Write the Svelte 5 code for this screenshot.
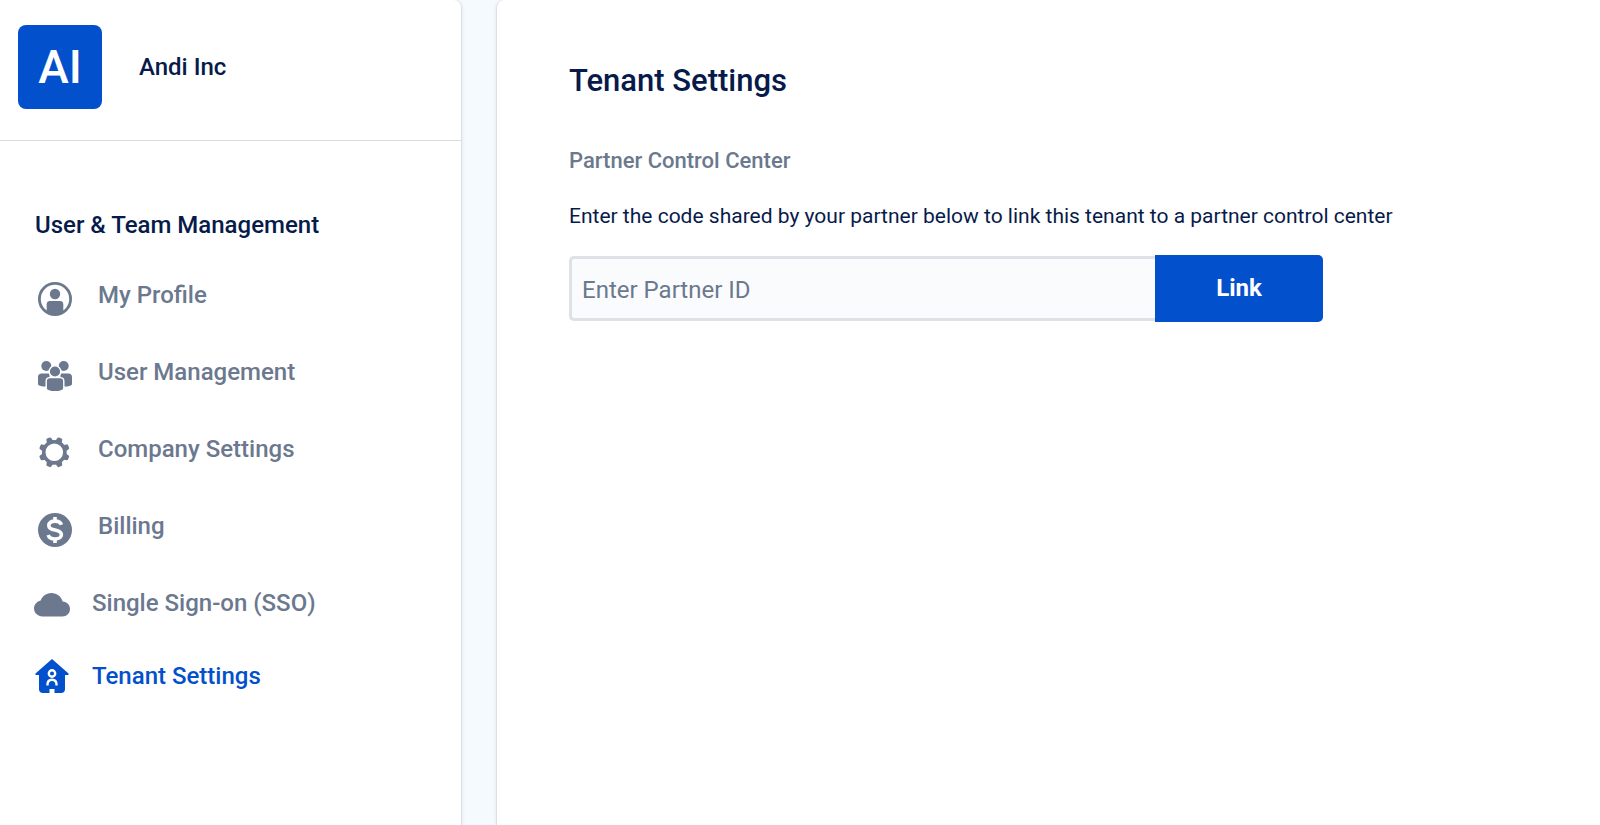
<script>
    const company = { name: "Andi Inc", initials: "AI" };

    const navItems = [
        { id: "profile", label: "My Profile" },
        { id: "users", label: "User Management" },
        { id: "company", label: "Company Settings" },
        { id: "billing", label: "Billing" },
        { id: "sso", label: "Single Sign-on (SSO)", compact: true },
        { id: "tenant", label: "Tenant Settings", compact: true },
    ];

    let activeItem = $state("tenant");
    let partnerId = $state("");

    function selectItem(e, id) {
        e.preventDefault();
        activeItem = id;
    }

    function linkPartner(e) {
        e.preventDefault();
        partnerId = partnerId.trim();
    }
</script>

{#snippet icon(id)}
    <svg class="icon" viewBox="0 0 34 34" aria-hidden="true">
        {#if id === "profile"}
            <circle cx="17" cy="17" r="15.6" fill="none" stroke="currentColor" stroke-width="2.8" />
            <circle cx="17" cy="12" r="5.2" />
            <path d="M8.7 29.5v-7.300c0-2 1.400-3.200 3.200-3.200h10.200c1.800 0 3.200 1.200 3.200 3.200v7.300A15.600 15.600 0 0 1 17 32.500a15.600 15.600 0 0 1-8.300-3z" />
        {:else if id === "users"}
            <circle cx="8.3" cy="7" r="5" />
            <circle cx="25.7" cy="7" r="5" />
            <path d="M3.5 14.500h8v13H6c-3 0-6-1-6-2.500v-7c0-2.300 1.400-3.500 3.500-3.500z" />
            <path d="M30.500 14.500h-8v13H28c3 0 6-1 6-2.500v-7c0-2.300-1.400-3.500-3.500-3.500z" />
            <circle class="cutout" cx="17" cy="12.500" r="5.800" />
            <path class="cutout" d="M11.900 18.600h10.200c2.200 0 3.700 1.300 3.700 3.400v7.500c0 1.900-4 3.300-8.800 3.300s-8.800-1.400-8.800-3.300V22c0-2.100 1.500-3.400 3.700-3.400z" />
        {:else if id === "company"}
            <g transform="translate(16.300 16.300)">
                {#each [22.5, 67.5, 112.5, 157.5, 202.5, 247.5, 292.5, 337.5] as angle}
                    <path transform="rotate({angle})" d="M-3.600-10l1-4.400q.2-1 1.200-1h2.800q1 0 1.200 1l1 4.400z" />
                {/each}
                <circle r="10.600" fill="none" stroke="currentColor" stroke-width="3.600" />
            </g>
        {:else if id === "billing"}
            <circle cx="17" cy="17" r="17" />
            <path
                class="line dollar"
                d="M23.400 11.800c-.8-2.500-3.200-3.700-6.400-3.700-3.700 0-6.200 1.700-6.200 4.300 0 2.800 2.700 3.900 6.200 4.600 3.900.8 6.400 1.800 6.400 4.700 0 2.600-2.600 4.300-6.400 4.300-3.600 0-6-1.300-6.800-4M17 4v4.500M17 25.500V30"
            />
        {:else if id === "sso"}
            <path d="M7.500 30.500C2.800 30.500-1 27-1 22.600c0-4 2.800-7.300 6.700-8.200C7.300 10 11.700 7 16.500 7c5.400 0 10 3.600 11.100 8.600C32 16 35 19 35 23c0 4.200-3.300 7.500-7.500 7.500z" />
        {:else}
            <path d="M17 0l16.500 14.600q.7 1-.4 1.400H30v14q0 4-4 4h-6.500v-4h-5v4H8q-4 0-4-4V16H.900q-1.100-.4-.4-1.400z" />
            <circle class="line thin" cx="17" cy="14.500" r="3.200" />
            <path class="line thin" d="M12.500 26.500v-1c0-2.900 1.700-4.800 4.500-4.800s4.500 1.900 4.500 4.800v1" />
        {/if}
    </svg>
{/snippet}

<div class="page">
    <aside class="sidebar">
        <header class="company">
            <div class="logo">{company.initials}</div>
            <span class="company-name">{company.name}</span>
        </header>

        <nav class="menu" aria-labelledby="menu-title">
            <h2 id="menu-title">User &amp; Team Management</h2>
            <ul>
                {#each navItems as item (item.id)}
                    <li>
                        <a
                            class="nav-link"
                            class:compact={item.compact}
                            class:active={activeItem === item.id}
                            href="#{item.id}"
                            aria-current={activeItem === item.id ? "page" : undefined}
                            onclick={(e) => selectItem(e, item.id)}
                        >
                            {@render icon(item.id)}
                            <span>{item.label}</span>
                        </a>
                    </li>
                {/each}
            </ul>
        </nav>
    </aside>

    <main class="content">
        <h1>Tenant Settings</h1>
        <h2>Partner Control Center</h2>
        <label for="partner-id">
            Enter the code shared by your partner below to link this tenant to a partner control center
        </label>
        <form class="link-form" onsubmit={linkPartner}>
            <input id="partner-id" type="text" placeholder="Enter Partner ID" bind:value={partnerId} />
            <button type="submit">Link</button>
        </form>
    </main>
</div>

<style>
    :global(body) {
        margin: 0;
        background: #f5faff;
    }

    .page {
        display: grid;
        grid-template-columns: minmax(320px, 462px) minmax(0, 1fr);
        gap: 34px;
        min-height: 100vh;
        color: #071b4b;
        font-family: Roboto, "Liberation Sans", sans-serif;
    }

    .page * {
        box-sizing: border-box;
    }

    .sidebar,
    .content {
        background: #fff;
        border: 1px solid #dcdfe6;
        border-top: none;
        border-bottom: none;
        box-shadow: 0 0 4px rgba(9, 30, 66, 0.08);
    }

    .sidebar {
        border-left: none;
        border-radius: 0 8px 0 0;
    }

    .content {
        padding: 63px 40px 40px 72px;
        border-right: none;
        border-radius: 8px 0 0 0;
    }

    .company {
        display: flex;
        align-items: center;
        gap: 37px;
        padding: 25px 18px 31px;
        border-bottom: 1px solid #d9dce4;
    }

    .logo {
        display: grid;
        place-items: center;
        width: 84px;
        height: 84px;
        border-radius: 8px;
        background: #0350cc;
        color: #fff;
        font-size: 46px;
        font-weight: 500;
    }

    .company-name {
        font-size: 24px;
        font-weight: 500;
        line-height: 32px;
    }

    .menu {
        padding: 68px 35px 40px;
    }

    h1,
    h2 {
        margin: 0;
        font-weight: 500;
    }

    .menu h2 {
        font-size: 24px;
        line-height: 32px;
    }

    ul {
        display: grid;
        gap: 40px;
        margin: 38px 0 0;
        padding: 0;
        list-style: none;
    }

    .nav-link {
        display: flex;
        align-items: flex-start;
        gap: 26px;
        height: 37px;
        padding-left: 3px;
        color: #6b788e;
        font-size: 24px;
        font-weight: 500;
        line-height: 32px;
        text-decoration: none;
    }

    .nav-link.compact {
        gap: 23px;
        height: 33px;
        padding-left: 0;
    }

    .nav-link.active {
        color: #0350cc;
    }

    .icon {
        flex: none;
        align-self: flex-end;
        width: 34px;
        height: 34px;
        overflow: visible;
        fill: currentColor;
    }

    .cutout {
        stroke: #fff;
        stroke-width: 1.4;
    }

    .line {
        fill: none;
        stroke: #fff;
    }

    .dollar {
        stroke-width: 3.6;
    }

    .thin {
        stroke-width: 2.4;
    }

    h1 {
        font-size: 31px;
        line-height: 36px;
    }

    .content h2 {
        margin-top: 48px;
        color: #6b788e;
        font-size: 22px;
        line-height: 28px;
    }

    label {
        display: block;
        margin-top: 27px;
        font-size: 21px;
        line-height: 28px;
    }

    .link-form {
        display: flex;
        align-items: center;
        max-width: 754px;
        margin-top: 25px;
    }

    input {
        flex: 1;
        min-width: 0;
        height: 65px;
        padding: 2px 10px 0;
        border: 3px solid #dfe1e6;
        border-right: none;
        border-radius: 5px 0 0 5px;
        background: #fafbfd;
        color: #071b4b;
        font-family: inherit;
        font-size: 24px;
    }

    input::placeholder {
        color: #6b788e;
        opacity: 1;
    }

    button {
        width: 168px;
        height: 67px;
        padding: 0 0 2px;
        border: none;
        border-radius: 0 5px 5px 0;
        background: #0350cc;
        color: #fff;
        font-family: inherit;
        font-size: 24px;
        font-weight: 700;
        cursor: pointer;
    }
</style>
